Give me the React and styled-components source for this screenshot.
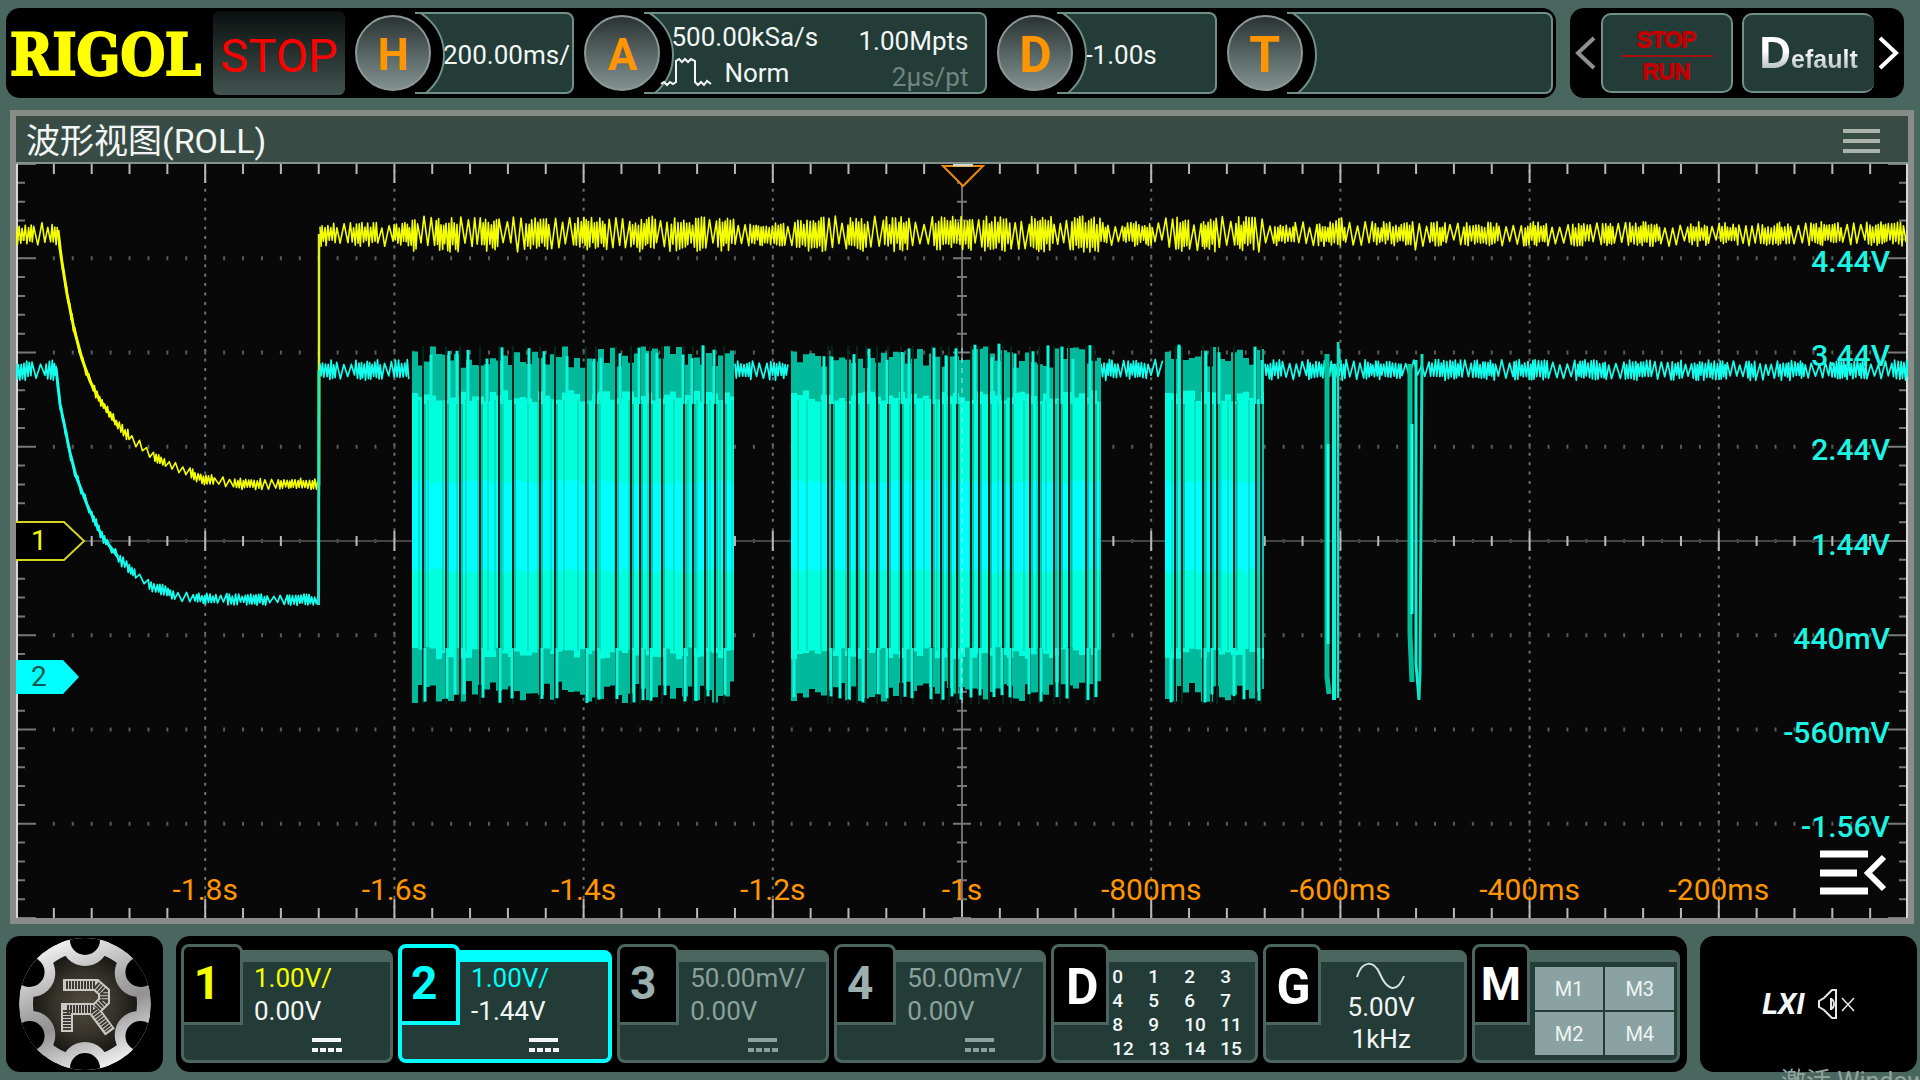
import React from "react";
import styled, { createGlobalStyle } from "styled-components";

const color = {
  page: "#4a675f",
  panel: "#233c37",
  line: "#6f8f88",
  frame: "#4b665f",
  text: "#f2f7f5",
  dim: "#8aa19c",
  yellow: "#f4ff00",
  cyan: "#00ffff",
  orange: "#ff9500",
};

const GlobalStyle = createGlobalStyle`
  * { box-sizing: border-box; }
  body {
    margin: 0;
    background: ${color.page};
    font-family: Roboto, "Noto Sans CJK SC", sans-serif;
    color: ${color.text};
  }
  button {
    margin: 0;
    padding: 0;
    border: 0;
    background: none;
    color: inherit;
    font: inherit;
    cursor: pointer;
  }
  svg { display: block; }
`;

const Page = styled.div`
  position: relative;
  display: flex;
  flex-direction: column;
  gap: 12px;
  min-height: 100vh;
  padding: 8px 0;
  overflow: hidden;
`;

/* ---------- top bar ---------- */

const Header = styled.header`
  display: flex;
  gap: 14px;
  height: 90px;
  padding: 0 16px 0 6px;
`;

const Bar = styled.div`
  display: flex;
  align-items: center;
  border-radius: 14px;
  background: #000;
`;

const StatusBar = styled(Bar)`
  flex: 1;
  gap: 10px;
  padding-right: 3px;
`;

const Brand = styled.div`
  width: 197px;
  padding: 4px 0 0 4px;
  font: bold 57px/86px "DejaVu Serif Condensed", "DejaVu Serif", serif;
  color: #ffff00;
  -webkit-text-stroke: 2px #ffff00;
  white-space: nowrap;
`;

const RunState = styled.button`
  width: 132px;
  height: 84px;
  && {
    padding-top: 4px;
    border-radius: 6px;
    background: linear-gradient(#0a0f0e, #42544f);
    color: #ff0000;
    font-size: 47px;
  }
`;

const Group = styled.div`
  display: flex;
  align-items: center;
  flex: ${(p) => p.$size} 1 0;
  min-width: 0;
`;

const Knob = styled.button`
  position: relative;
  z-index: 1;
  flex: none;
  width: 76px;
  height: 76px;
  && {
    padding-top: 3px;
    border: 2px solid #8b9896;
    border-radius: 50%;
    background: linear-gradient(#2b3232, #566463 50%, #82908f);
    color: ${color.orange};
    font-weight: 700;
    font-size: ${(p) => (p.$heavy ? 50 : 44)}px;
    line-height: 68px;
  }
`;

const Readout = styled.div`
  position: relative;
  display: flex;
  align-items: center;
  flex: 1;
  height: 82px;
  min-width: 0;
  margin-left: -16px;
  padding: 4px 0 0 28px;
  overflow: hidden;
  border: 2px solid ${color.line};
  border-left: 0;
  border-radius: 0 8px 8px 0;
  background: ${color.panel};
  font-size: 26px;
  line-height: 36px;
  white-space: nowrap;

  &::before {
    content: "";
    position: absolute;
    left: -70px;
    top: -9px;
    width: 96px;
    height: 96px;
    border: 2px solid ${color.line};
    border-radius: 50%;
    background: #000;
  }
`;

const Acquire = styled.div`
  position: relative;
  display: flex;
  justify-content: space-between;
  flex: 1;
  margin-left: -12px;
  padding: 4px 17px 0 0;
`;

const Rate = styled.div`
  padding-left: 11px;
`;

const Mode = styled.div`
  display: flex;
  align-items: center;
  gap: 10px;
`;

const Depth = styled.div`
  padding-top: 4px;
  text-align: right;
`;

const Muted = styled.div`
  color: #72857f;
`;

const QuickBar = styled(Bar)`
  width: 334px;
  justify-content: space-between;
  padding: 0 5px;
`;

const QuickList = styled.div`
  display: flex;
  gap: 9px;
`;

const Quick = styled.button`
  display: flex;
  align-items: center;
  justify-content: center;
  width: 132px;
  height: 80px;
  && {
    padding-top: 6px;
    border: 2px solid ${color.line};
    border-right-width: ${(p) => (p.$cut ? 0 : 2)}px;
    border-radius: 10px;
    background: ${color.panel};
  }
`;

const StopRun = styled.span`
  display: block;
  width: 92px;
  font: 22px/30px "Liberation Sans", sans-serif;
  color: #d40000;
  -webkit-text-stroke: 2px #c00000;

  span { display: block; }
  span + span { border-top: 2px solid #a81010; }
`;

const DefaultLabel = styled.span`
  display: block;
  font: bold 25px/48px "Liberation Sans", sans-serif;
  color: transparent;
  background: linear-gradient(#ffffff 40%, #a9b7b4 80%);
  background-clip: text;
  &::first-letter { font-size: 44px; }
`;

/* ---------- waveform window ---------- */

const Window = styled.main`
  display: flex;
  flex-direction: column;
  flex: 1;
  margin: 0 6px 0 10px;
  border: 6px solid #8a8c8a;
  border-top-color: #848d85;
  background: #080808;
`;

const TitleBar = styled.div`
  display: flex;
  align-items: center;
  justify-content: space-between;
  height: 48px;
  padding: 4px 28px 0 10px;
  border-bottom: 2px solid #84948d;
  background: #384c45;
`;

const Title = styled.h1`
  margin: 0;
  font-weight: 400;
  font-size: 34px;
  line-height: 42px;
`;

const Plot = styled.div`
  position: relative;
  flex: 1;
  min-height: 400px;
`;

const Trace = styled.svg`
  position: absolute;
  inset: 0;
  width: 100%;
  height: 100%;
`;

const TimeAxis = styled.div`
  position: absolute;
  left: 5%;
  right: 5%;
  bottom: 10px;
  display: flex;
  font-size: 30px;
  line-height: 36px;
  color: ${color.orange};

  span { flex: 1 1 0; text-align: center; }
`;

const VoltAxis = styled.div`
  position: absolute;
  top: 6.25%;
  bottom: 6.25%;
  right: 18px;
  display: flex;
  flex-direction: column;
  font-weight: 500;
  font-size: 30px;
  color: #1cf5e4;

  span {
    display: flex;
    flex: 1 1 0;
    align-items: center;
    justify-content: flex-end;
    padding-top: 6px;
  }
`;

const Marker = styled.div`
  position: absolute;
  left: 0;
  top: ${(p) => p.$top};
  transform: translateY(-50%);
  display: grid;
  align-items: center;
  font-size: 28px;
  line-height: 32px;
  color: ${(p) => p.$ink};

  > * { grid-area: 1 / 1; }
  span { padding-left: 15px; }
`;

const Expand = styled.button`
  position: absolute;
  right: 21px;
  bottom: 22px;
`;

/* ---------- bottom bar ---------- */

const Footer = styled.footer`
  display: flex;
  gap: 13px;
  height: 136px;
  padding: 0 3px 0 6px;
`;

const Home = styled.button`
  width: 157px;
  && { border-radius: 14px; background: #000; }
  svg { margin: 0 auto; }
`;

const Channels = styled(Bar)`
  flex: 1;
  gap: 5px;
  padding: 0 7px 0 5px;
`;

const Card = styled.section`
  display: flex;
  align-items: flex-start;
  flex: ${(p) => p.$size} 1 0;
  min-width: 0;
  height: 113px;
  margin-top: 5px;
  border: ${(p) => (p.$active ? 4 : 3)}px solid ${(p) => (p.$active ? color.cyan : color.frame)};
  border-top-width: 12px;
  border-radius: 8px;
  background: ${color.panel};
`;

const Tab = styled.button`
  flex: none;
  width: ${(p) => (p.$wide ? 58 : 62)}px;
  height: 81px;
  && {
    margin: -18px 0 0 ${(p) => (p.$active ? -4 : -3)}px;
    padding: ${(p) => (p.$wide ? "6px 0 0 4px" : "0 10px 2px 0")};
    border: ${(p) => (p.$active ? 4 : 3)}px solid ${(p) => (p.$active ? color.cyan : color.frame)};
    border-radius: 8px 8px 0 0;
    background: #000;
    color: ${(p) => p.$ink};
    font-weight: 700;
    font-size: ${(p) => (p.$wide ? 50 : 46)}px;
    line-height: 69px;
  }
`;

const MathTab = styled(Tab)`
  && {
    padding: 0;
    font-size: 46px;
  }
`;

const Values = styled.div`
  flex: 1;
  padding-left: 11px;
  color: ${(p) => p.$ink};
  font-size: 26px;
  line-height: 33px;
  white-space: nowrap;

  div:first-child { color: ${(p) => p.$scale}; }
  svg { margin: 10px 0 0 58px; }
`;

const Digits = styled.div`
  display: grid;
  flex: 1;
  grid-template-columns: repeat(4, 36px);
  padding: 3px 0 0 3px;
  font-weight: 500;
  font-size: 19px;
  line-height: 24px;
`;

const Generator = styled.div`
  flex: 1;
  padding-right: 22px;
  font-size: 26px;
  line-height: 32px;
  text-align: center;

  svg { margin: 0 auto; }
`;

const MathGrid = styled.div`
  display: grid;
  flex: 1;
  grid-template-columns: 1fr 1fr;
  gap: 2px;
  margin: 5px 3px 0 5px;

  button {
    height: 43px;
    background: #8aa2a1;
    color: #eef5f4;
    font-size: 20px;
  }
`;

const Tray = styled(Bar)`
  width: 217px;
  justify-content: center;
  gap: 12px;
`;

const Lxi = styled.span`
  font: italic 700 30px/36px Roboto, sans-serif;
`;

const Watermark = styled.div`
  position: absolute;
  left: 1781px;
  top: 1068px;
  font-size: 25px;
  line-height: 28px;
  color: #94a5a0;
  white-space: nowrap;
`;

/* ---------- waveform data ---------- */

const W = 1892;
const H = 754;

function random(seed) {
  let s = seed;
  return () => {
    s = (s * 1664525 + 1013904223) % 4294967296;
    return s / 4294967296;
  };
}

const bursts = [
  {
    from: 396, to: 718,
    gaps: [407, 430, 444, 464, 483, 497, 524, 539, 570, 580, 600, 615, 624, 634, 646, 668, 677, 689, 699, 708],
    crests: [415, 433, 441, 452, 471, 486, 513, 528, 551, 578, 585, 604, 623, 631, 641, 667, 676, 687, 698],
    roots: [408, 430, 438, 447, 466, 483, 495, 525, 540, 570, 582, 600, 617, 626, 634, 648, 668, 679, 691, 708],
  },
  {
    from: 775, to: 1085,
    gaps: [812, 816, 832, 841, 850, 861, 872, 885, 897, 916, 925, 933, 941, 955, 963, 973, 987, 995, 1014, 1023, 1038, 1044, 1053, 1070, 1078],
    crests: [808, 816, 838, 853, 871, 886, 893, 918, 930, 940, 959, 976, 983, 999, 1017, 1032, 1046, 1057, 1074],
    roots: [777, 814, 823, 832, 846, 861, 870, 888, 895, 914, 926, 935, 944, 954, 963, 977, 985, 993, 1012, 1024, 1040, 1050, 1071, 1079],
  },
  {
    from: 1149, to: 1248,
    gaps: [1159, 1166, 1187, 1195, 1201, 1218, 1240, 1245],
    crests: [1163, 1190, 1203, 1239, 1246],
    roots: [1154, 1188, 1195, 1217, 1227, 1242],
  },
];

const decay1 = [[42, 70], [45, 92], [51, 130], [58, 165], [66, 195], [74, 217], [82, 233], [102, 262], [115, 274], [130, 287], [147, 298], [168, 307], [188, 315], [219, 320], [303, 320]];
const decay2 = [[40, 205], [44, 240], [49, 264], [54, 289], [60, 312], [72, 343], [86, 372], [102, 393], [115, 407], [135, 422], [160, 431], [188, 435], [303, 436]];

function level(points, x) {
  for (let i = 1; i < points.length; i += 1) {
    const [x0, y0] = points[i - 1];
    const [x1, y1] = points[i];
    if (x <= x1) return y0 + ((y1 - y0) * (x - x0)) / (x1 - x0);
  }
  return points[points.length - 1][1];
}

/* A noisy line: stretches of dense hash alternate with looser ripple. */
function noise(from, to, base, amp, seed) {
  const rnd = random(seed);
  let x = from;
  let up = true;
  let dense = true;
  let left = 12;
  const pts = [];
  while (x < to) {
    const a = amp(x) * (0.45 + rnd() * 0.5);
    pts.push(`${x.toFixed(1)} ${(base(x) + (up ? -a : a)).toFixed(1)}`);
    up = !up;
    left -= 1;
    if (left < 0) {
      dense = !dense;
      left = dense ? 6 + rnd() * 22 : 2 + rnd() * 5;
    }
    x += dense ? 1 + rnd() * 0.8 : 2.5 + rnd() * 2;
  }
  return `M${pts.join("L")}`;
}

const inBurst = (x) => bursts.some((b) => x > b.from && x < b.to);
const spike = (x) => Math.abs(x - 1321) < 5 || Math.abs(x - 1403) < 5;

const yellowPaths = [
  noise(0, 42, () => 70, () => 12, 3),
  noise(42, 303, (x) => level(decay1, x), () => 6, 5),
  noise(304, W, () => 70, (x) => (inBurst(x) ? 19 : spike(x) ? 18 : 13), 9),
];

const cyanPaths = [
  noise(0, 40, () => 206, () => 11, 13),
  noise(40, 303, (x) => level(decay2, x), () => 6, 17),
  noise(304, 396, () => 206, () => 11, 21),
  noise(719, 775, () => 206, () => 11, 23),
  noise(1085, 1148, () => 206, () => 11, 27),
  noise(1249, W, () => 206, () => 11, 31),
];

/* One filled band whose upper and lower edges are stepped at random. */
function band(b, top, bottom, rough, seed) {
  const rnd = random(seed);
  const upper = [];
  const lower = [];
  for (let x = b.from; x < b.to; x += 6) {
    const end = Math.min(x + 6, b.to);
    const yt = top + (rnd() - 0.5) * rough;
    const yb = bottom + (rnd() - 0.5) * rough;
    upper.push(`${x} ${yt.toFixed(1)}`, `${end} ${yt.toFixed(1)}`);
    lower.unshift(`${end} ${yb.toFixed(1)}`, `${x} ${yb.toFixed(1)}`);
  }
  return `M${upper.concat(lower).join("L")}Z`;
}

function Burst({ data, seed }) {
  const rnd = random(seed);
  const hair = [];
  for (let x = data.from + 7; x < data.to; x += 7 + rnd() * 8) hair.push(Math.round(x));
  return (
    <g>
      <path d={band(data, 193, 528, 22, seed)} fill="#00ba9b" />
      <path d={band(data, 232, 489, 12, seed + 1)} fill="#00ffdd" />
      <path d={band(data, 318, 407, 5, seed + 2)} fill="#00ffff" />
      {hair.map((x) => (
        <path key={x} d={`M${x} 236V487`} stroke="#00b08c" strokeWidth="1" opacity="0.75" />
      ))}
      {data.gaps.map((x) => (
        <g key={x}>
          <path d={`M${x} 182V540`} stroke="#04241c" strokeWidth="2" />
          <path d={`M${x + 2} 240V484`} stroke="#0b8d6c" strokeWidth="1" />
        </g>
      ))}
      {data.crests.map((x) => {
        const y = 179 + rnd() * 18;
        return <path key={x} d={`M${x} ${y}V240`} stroke="#0ff5d8" strokeWidth="3" />;
      })}
      {data.roots.map((x) => {
        const y = 530 + rnd() * 9;
        return <path key={x} d={`M${x + 1} 484V${y}`} stroke="#0ff5d8" strokeWidth="3" />;
      })}
    </g>
  );
}

const range = (n) => Array.from({ length: n }, (_, i) => i);

function Graticule() {
  const dx = W / 10;
  const dy = H / 8;
  return (
    <g fill="none">
      {range(9).map((i) => (
        <path key={i} d={`M${(i + 1) * dx} 6V${H}`} stroke="#6e6e6e" strokeWidth="2" strokeDasharray="3 6.425" />
      ))}
      {range(7).map((i) => (
        <path key={i} d={`M${dx / 5 - 1} ${(i + 1) * dy}H${W - 30}`} stroke="#5a5a5a" strokeWidth="4" strokeDasharray="2 16.92" />
      ))}
      <path d={`M${W / 2} 0V${H}`} stroke="#6e6e6e" strokeWidth="2" />
      <path d={`M0 ${H / 2}H${W}`} stroke="#444444" strokeWidth="2" />
      {range(51).map((i) => {
        const x = (i * dx) / 5;
        const major = i % 5 === 0;
        const a = major ? 19 : 10;
        const c = major ? 10 : 5;
        return (
          <path key={i} d={`M${x} 0v${a}M${x} ${H}v${-a}M${x} ${H / 2 - c}v${c * 2}`} stroke="#b8b8b8" strokeWidth="2" />
        );
      })}
      {range(41).map((i) => {
        const y = (i * dy) / 5;
        const a = i % 5 === 0 ? 20 : 9;
        const c = i % 5 === 0 ? 9 : 5;
        return (
          <path key={i} d={`M0 ${y}h${a}M${W} ${y}h${-a}M${W / 2 - c} ${y}h${c * 2}`} stroke="#787878" strokeWidth="2" />
        );
      })}
      <path d={`M1 0V${H}M${W - 1} 0V${H}`} stroke="#d8d8d8" strokeWidth="2" />
    </g>
  );
}

function Waveforms() {
  return (
    <Trace viewBox={`0 0 ${W} ${H}`} preserveAspectRatio="none" role="img" aria-label="波形">
      <defs>
        <linearGradient id="edge" gradientUnits="userSpaceOnUse" x1="0" y1="200" x2="0" y2="440">
          <stop offset="0" stopColor="#2cf0a0" />
          <stop offset="1" stopColor="#2fd9cf" />
        </linearGradient>
      </defs>
      <Graticule />
      <g fill="none" stroke={color.yellow} strokeWidth="1.6" strokeLinejoin="round">
        {yellowPaths.map((d) => <path key={d.length} d={d} />)}
        <path d="M42 66L45 92L51 130L58 165L66 195L74 217L82 233L102 262" strokeWidth="3" />
        <path d="M303 322V70" stroke="#dff02a" strokeWidth="2.5" />
      </g>
      <g fill="none" stroke="#14ffee" strokeWidth="1.7" strokeLinejoin="round">
        {cyanPaths.map((d) => <path key={d.length} d={d} />)}
        <path d="M40 204L44 240L49 264L54 289L60 312L72 343L86 372L102 393" strokeWidth="3" />
        <path d="M302.500 441L303 206" stroke="url(#edge)" strokeWidth="3" />
      </g>
      {bursts.map((b, i) => <Burst key={b.from} data={b} seed={41 + i * 10} />)}
      <g fill="none">
        <path d="M1311 190V512L1313 530" stroke="#00c09c" strokeWidth="5" />
        <path d="M1312 280V480" stroke="#18ffe6" strokeWidth="3" />
        <path d="M1318 200V536" stroke="#10f0d4" strokeWidth="4" />
        <path d="M1322 534V178L1324 200" stroke="#0fe0c0" strokeWidth="2.500" />
        <path d="M1394 200V470L1396 518" stroke="#00c09c" strokeWidth="5" />
        <path d="M1396 260V450" stroke="#18ffe6" strokeWidth="3" />
        <path d="M1400 196V500L1403 536" stroke="#10f0d4" strokeWidth="3" />
        <path d="M1406 190L1404 510L1403 534" stroke="#0fe0c0" strokeWidth="3" />
      </g>
      <path d={`M${W / 2} 184V540`} stroke="#b8ffff" strokeWidth="2" strokeDasharray="5 5" opacity="0.4" />
      <path d="M927 2H967L947 22Z" fill="#0a0500" stroke="#e88a10" strokeWidth="2" />
      <path d="M937 1H957" stroke="#d8d8c8" strokeWidth="3" />
    </Trace>
  );
}

/* ---------- icons ---------- */

const Chevron = ({ flip, stroke }) => (
  <svg width="22" height="34" viewBox="0 0 22 34" fill="none" stroke={stroke} strokeWidth="4">
    <path d={flip ? "M3 2L19 17L3 32" : "M19 2L3 17L19 32"} />
  </svg>
);

const PulseIcon = () => (
  <svg width="54" height="32" viewBox="0 0 54 32" fill="none" stroke="#f2f7f5" strokeWidth="2">
    <path d="M1 27l3-2 3 3 3-3 3 2 3-2V4l3-2 3 3 3-3 3 3 3-3 4 2V25l3 3 3-3 3 3 3-4 4 3" />
  </svg>
);

const MenuIcon = () => (
  <svg width="37" height="24" viewBox="0 0 37 24" stroke="#a9b2ac" strokeWidth="4">
    <path d="M0 2H37M0 12H37M0 22H37" />
  </svg>
);

const ExpandIcon = () => (
  <svg width="68" height="46" viewBox="0 0 68 46" fill="none" stroke="#fff" strokeWidth="7">
    <path d="M1 4H49M1 23H38M1 41H49" />
    <path d="M65 7L49 23L65 39" strokeWidth="6" />
  </svg>
);

const CouplingIcon = ({ stroke }) => (
  <svg width="30" height="15" viewBox="0 0 30 15" stroke={stroke}>
    <path d="M0 2H29" strokeWidth="4" />
    <path d="M0 12H30" strokeWidth="4" strokeDasharray="6 2" />
  </svg>
);

const SineIcon = () => (
  <svg width="50" height="29" viewBox="0 0 50 29" fill="none" stroke="#d5dfdc" strokeWidth="2">
    <path d="M1 15C6 -2 18 -2 24 12S40 34 48 14" />
  </svg>
);

const MuteIcon = () => (
  <svg width="38" height="30" viewBox="0 0 38 30" fill="none" stroke="#e8e8e8" strokeWidth="2">
    <path d="M2 12V18L7 21L15 29H19V1H15L7 9Z" />
    <path d="M14 9V21" />
    <path d="M15 10Q19 15 15 20" />
    <path d="M25 9L37 22M37 9L25 22" strokeWidth="1.500" />
  </svg>
);

function GearLogo() {
  return (
    <svg width="136" height="132" viewBox="-68 -66 136 132">
      <defs>
        <linearGradient id="steel" gradientUnits="userSpaceOnUse" x1="-30" y1="-64" x2="20" y2="64">
          <stop offset="0" stopColor="#f4f4f4" />
          <stop offset="0.45" stopColor="#a4a4a4" />
          <stop offset="0.6" stopColor="#929292" />
          <stop offset="1" stopColor="#f0f0f0" />
        </linearGradient>
        <radialGradient id="core">
          <stop offset="0" stopColor="#504c40" />
          <stop offset="0.6" stopColor="#35322a" />
          <stop offset="1" stopColor="#1a1814" />
        </radialGradient>
        <clipPath id="disc"><circle r="66" /></clipPath>
      </defs>
      <g clipPath="url(#disc)">
        <circle r="66" fill="url(#steel)" />
        <circle r="52" fill="url(#core)" />
        {range(6).map((i) => {
          const t = (i * Math.PI) / 3;
          return <circle key={i} cx={62 * Math.sin(t)} cy={-62 * Math.cos(t)} r="24" fill="url(#steel)" />;
        })}
        {range(6).map((i) => {
          const t = (i * Math.PI) / 3;
          return <circle key={i} cx={64 * Math.sin(t)} cy={-64 * Math.cos(t)} r="15" fill="#000" />;
        })}
      </g>
      <g fill="none" stroke="#c8c8c4" strokeWidth="12">
        <polyline points="-22,-19 11,-19 19,-12 19,-3 11,5" />
        <polyline points="-18,28 -18,5 8,5 25,28" />
      </g>
      <g fill="none" stroke="#3c3a33" strokeWidth="8" strokeDasharray="2 1">
        <polyline points="-19,-19 11,-19 19,-12 19,-3 11,5" />
        <polyline points="-18,26 -18,5 8,5 24,26" />
      </g>
    </svg>
  );
}

/* ---------- page ---------- */

const channels = [
  { name: "1", scale: "1.00V/", offset: "0.00V", ink: color.yellow, text: color.text },
  { name: "2", scale: "1.00V/", offset: "-1.44V", ink: "#00ffff", text: color.text, active: true },
  { name: "3", scale: "50.00mV/", offset: "0.00V", ink: "#9bb0af", text: color.dim },
  { name: "4", scale: "50.00mV/", offset: "0.00V", ink: "#9bb0af", text: color.dim },
];

const times = ["-1.8s", "-1.6s", "-1.4s", "-1.2s", "-1s", "-800ms", "-600ms", "-400ms", "-200ms"];
const volts = ["4.44V", "3.44V", "2.44V", "1.44V", "440mV", "-560mV", "-1.56V"];

export default function App() {
  return (
    <Page>
      <GlobalStyle />
      <Header>
        <StatusBar>
          <Brand>RIGOL</Brand>
          <RunState>STOP</RunState>
          <Group $size={220}>
            <Knob>H</Knob>
            <Readout>200.00ms/</Readout>
          </Group>
          <Group $size={404}>
            <Knob>A</Knob>
            <Readout>
              <Acquire>
                <div>
                  <Rate>500.00kSa/s</Rate>
                  <Mode><PulseIcon />Norm</Mode>
                </div>
                <Depth>
                  <div>1.00Mpts</div>
                  <Muted>2μs/pt</Muted>
                </Depth>
              </Acquire>
            </Readout>
          </Group>
          <Group $size={220}>
            <Knob $heavy>D</Knob>
            <Readout>-1.00s</Readout>
          </Group>
          <Group $size={327}>
            <Knob $heavy>T</Knob>
            <Readout />
          </Group>
        </StatusBar>
        <QuickBar>
          <button aria-label="上一页"><Chevron stroke="#909090" /></button>
          <QuickList>
            <Quick>
              <StopRun><span>STOP</span><span>RUN</span></StopRun>
            </Quick>
            <Quick $cut><DefaultLabel>Default</DefaultLabel></Quick>
          </QuickList>
          <button aria-label="下一页"><Chevron flip stroke="#ffffff" /></button>
        </QuickBar>
      </Header>

      <Window>
        <TitleBar>
          <Title>波形视图(ROLL)</Title>
          <button aria-label="菜单"><MenuIcon /></button>
        </TitleBar>
        <Plot>
          <Waveforms />
          <TimeAxis>{times.map((t) => <span key={t}>{t}</span>)}</TimeAxis>
          <VoltAxis>{volts.map((v) => <span key={v}>{v}</span>)}</VoltAxis>
          <Marker $top="50%" $ink={color.yellow}>
            <svg width="70" height="42" viewBox="0 0 70 42">
              <path d="M0 2H48L68 21L48 40H0" fill="#000" stroke="#d4d422" strokeWidth="2" />
            </svg>
            <span>1</span>
          </Marker>
          <Marker $top="68%" $ink="#0d5a50">
            <svg width="64" height="34" viewBox="0 0 64 34">
              <path d="M0 0H47L63 17L47 34H0Z" fill={color.cyan} />
            </svg>
            <span>2</span>
          </Marker>
          <Expand aria-label="展开"><ExpandIcon /></Expand>
        </Plot>
      </Window>

      <Footer>
        <Home aria-label="主菜单"><GearLogo /></Home>
        <Channels>
          {channels.map((c) => (
            <Card key={c.name} $size={212} $active={c.active}>
              <Tab $ink={c.ink} $active={c.active}>{c.name}</Tab>
              <Values $ink={c.text} $scale={c.text === color.dim ? color.dim : c.ink}>
                <div>{c.scale}</div>
                <div>{c.offset}</div>
                <CouplingIcon stroke={c.text} />
              </Values>
            </Card>
          ))}
          <Card $size={206}>
            <Tab $wide $ink="#fff">D</Tab>
            <Digits>{range(16).map((n) => <span key={n}>{n}</span>)}</Digits>
          </Card>
          <Card $size={204}>
            <Tab $wide $ink="#fff">G</Tab>
            <Generator>
              <SineIcon />
              <div>5.00V</div>
              <div>1kHz</div>
            </Generator>
          </Card>
          <Card $size={208}>
            <MathTab $wide $ink="#fff">M</MathTab>
            <MathGrid>
              <button>M1</button>
              <button>M3</button>
              <button>M2</button>
              <button>M4</button>
            </MathGrid>
          </Card>
        </Channels>
        <Tray>
          <Lxi>LXI</Lxi>
          <MuteIcon />
        </Tray>
      </Footer>
      <Watermark>激活 Windows</Watermark>
    </Page>
  );
}
